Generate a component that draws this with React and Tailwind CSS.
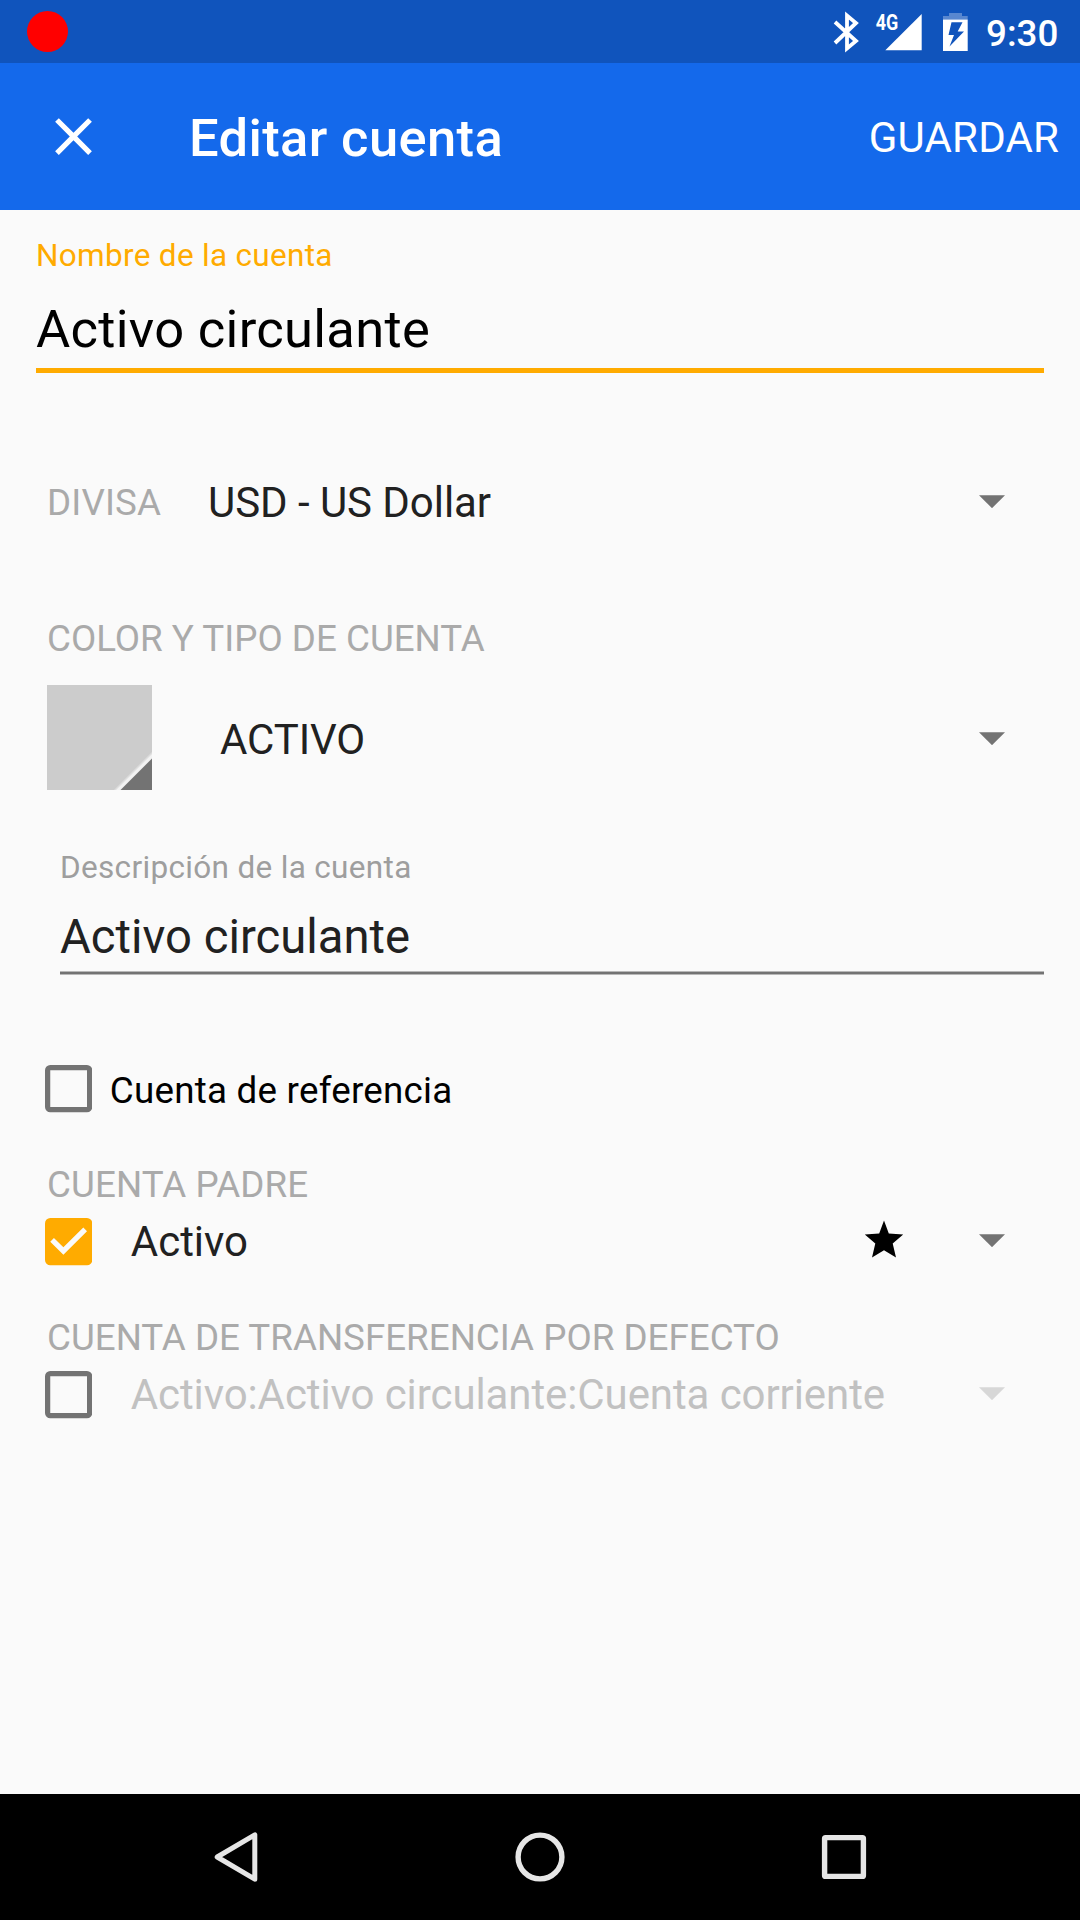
function Arrow({ className = '' }) {
  return (
    <svg viewBox="0 0 26 13" className={`block w-[26px] h-[13px] shrink-0 ${className}`}>
      <path d="M0 0.2H26L13 13.2Z" fill="#737373" />
    </svg>
  )
}

function Checkbox({ checked = false }) {
  return (
    <svg viewBox="0 0 18 18" className="block w-[47.25px] h-[47.25px] shrink-0">
      {checked ? (
        <>
          <rect width="18" height="18" rx="2" fill="#ffab00" />
          <path d="M7 14L2 9l1.41-1.41L7 11.17l7.59-7.59L16 5Z" fill="#fafafa" />
        </>
      ) : (
        <rect x="1" y="1" width="16" height="16" rx="1" fill="none" stroke="#737373" strokeWidth="2" />
      )}
    </svg>
  )
}

function StatusBar() {
  return (
    <div className="h-[63px] bg-[#1054bc] flex items-center pl-[27px] pr-[21px]">
      <div className="size-[41px] rounded-full bg-[#ff0000]" />
      <div className="ml-auto flex items-center">
        <svg viewBox="0 -8 140 56" className="block w-[140px] h-[56px]">
          <path d="M5.5 10.5L26.5 29.5L17.5 37V4L26.5 11.5L5.5 31.5" transform="translate(-0.5 -0.5)" fill="none" stroke="#fff" strokeWidth="3.8" />
          <path d="M91.7 2V38.3H55.3Z" fill="#fff" />
          <text x="45.8" y="17.6" fontSize="22.5" fontWeight="700" textLength="22.5" lengthAdjust="spacingAndGlyphs" fill="#fff">4G</text>
          <path d="M119 1h13v3h5.7v3.5H113V4h6z" fill="#fff" opacity="0.3" />
          <path fillRule="evenodd" d="M113 7.5h24.7V39H113ZM121.5 10.3L118.5 23H124L119.5 34.5L134 19.5H127.7L132.5 10.3Z" fill="#fff" />
        </svg>
        <span className="ml-[16px] mt-[5px] text-[36.75px] leading-[44px] font-medium w-[73px] whitespace-nowrap">9:30</span>
      </div>
    </div>
  )
}

function AppBar() {
  return (
    <header className="h-[147px] bg-[#1469eb] flex items-center pl-[42px] pr-[21px]">
      <svg viewBox="0 0 24 24" className="block size-[63px]">
        <path d="M19 6.41L17.59 5 12 10.59 6.41 5 5 6.41 10.59 12 5 17.59 6.41 19 12 13.41 17.59 19 19 17.59 13.41 12Z" fill="#fff" />
      </svg>
      <h1 className="ml-[84px] mt-[3px] text-[52.5px] leading-[62px] font-medium tracking-[0.37px]">Editar cuenta</h1>
      <button className="ml-auto mt-[2px] text-[42px] leading-[50px] tracking-[0.15px]">GUARDAR</button>
    </header>
  )
}

function NavBar() {
  return (
    <nav className="h-[126px] bg-black flex items-center justify-between pl-[211px] pr-[211px]">
      <svg viewBox="0 0 50 52" className="block w-[50px] h-[52px]">
        <path d="M43.8 3.8V48.2L6.2 26Z" fill="none" stroke="#e6e6e6" strokeWidth="5" strokeLinejoin="round" />
      </svg>
      <svg viewBox="0 0 50 50" className="block size-[50px]">
        <circle cx="25" cy="25" r="21.9" fill="none" stroke="#e6e6e6" strokeWidth="5.4" />
      </svg>
      <svg viewBox="0 0 50 50" className="block size-[50px]">
        <rect x="5.6" y="5.6" width="38.8" height="38.8" rx="1" fill="none" stroke="#e6e6e6" strokeWidth="5.4" />
      </svg>
    </nav>
  )
}

export default function App() {
  return (
    <div className="w-[1080px] h-[1920px] flex flex-col overflow-hidden bg-[#fafafa] font-['Roboto',sans-serif] text-white">
      <StatusBar />
      <AppBar />
      <main className="flex-1 flex flex-col text-[#212121] whitespace-nowrap">
        <section className="mx-[36px] mt-[26px]">
          <div className="text-[31.5px] leading-[40px] tracking-[0.31px] text-[#ffab00]">Nombre de la cuenta</div>
          <div className="mt-[18px] h-[74px] text-[52.5px] leading-[70px] tracking-[0.3px] text-black">Activo circulante</div>
          <div className="h-[5px] bg-[#ffab00]" />
        </section>

        <section className="mt-[98px] ml-[47px] mr-[75.5px] h-[64px] flex items-center">
          <span className="w-[161px] text-[36.75px] leading-[64px] tracking-[0.15px] text-[#aaaaaa]">DIVISA</span>
          <span className="text-[42px] leading-[64px] tracking-[-0.05px]">USD - US Dollar</span>
          <Arrow className="ml-auto mb-[4px]" />
        </section>

        <section className="mt-[82px] ml-[47px] mr-[75.5px]">
          <div className="h-[68px] text-[36.75px] leading-[44px] text-[#aaaaaa]">COLOR Y TIPO DE CUENTA</div>
          <div className="flex items-center h-[105px]">
            <svg viewBox="0 0 105 105" className="block size-[105px]">
              <path d="M0 0H105V105H0Z" fill="#cccccc" />
              <path d="M105 67V105H67Z" fill="#dddddd" />
              <path d="M105 69V105H69Z" fill="#f2f2f2" />
              <path d="M105 73.5V105H73.5Z" fill="#737373" />
            </svg>
            <span className="ml-[68px] mt-[5px] text-[42px] leading-[50px] tracking-[-0.1px]">ACTIVO</span>
            <Arrow className="ml-auto mt-[2px]" />
          </div>
        </section>

        <section className="mt-[58px] ml-[60px] mr-[36px]">
          <div className="text-[31.5px] leading-[40px] tracking-[0.33px] text-[#9e9e9e]">Descripción de la cuenta</div>
          <div className="mt-[19px] h-[64px] text-[47.25px] leading-[60px]">Activo circulante</div>
          <div className="h-[4px] bg-[#737373] border-y border-[#b8b8b8]" />
        </section>

        <section className="mt-[90px] ml-[44.5px] flex items-center h-[48px] text-black">
          <Checkbox />
          <span className="ml-[18px] mt-[3px] text-[36.75px] leading-[44px] tracking-[0.24px]">Cuenta de referencia</span>
        </section>

        <section className="mt-[50px] ml-[44.5px] mr-[75.5px]">
          <div className="ml-[2.5px] text-[36.75px] leading-[44px] tracking-[0.08px] text-[#aaaaaa]">CUENTA PADRE</div>
          <div className="mt-[11px] h-[48px] flex items-center">
            <Checkbox checked />
            <span className="ml-[39px] text-[42px] leading-[50px]">Activo</span>
            <svg viewBox="0 0 40 38" className="block ml-auto mb-[7px] w-[40px] h-[38px]">
              <path d="M20 0.5L24.8 13.4L39.2 14.6L28.7 23.5L32 37.6L20 30.2L8 37.6L11.3 23.5L0.8 14.6L15.2 13.4Z" fill="#000" />
            </svg>
            <Arrow className="ml-[75px] mb-[3px]" />
          </div>
        </section>

        <section className="mt-[50px] ml-[44.5px] mr-[75.5px]">
          <div className="ml-[2.5px] text-[36.75px] leading-[44px] text-[#aaaaaa]">CUENTA DE TRANSFERENCIA POR DEFECTO</div>
          <div className="mt-[11px] h-[48px] flex items-center">
            <Checkbox />
            <span className="ml-[39px] text-[42px] leading-[50px] tracking-[-0.09px] text-[#c1c1c1]">Activo:Activo circulante:Cuenta corriente</span>
            <Arrow className="ml-auto mb-[3px] opacity-25" />
          </div>
        </section>
      </main>
      <NavBar />
    </div>
  )
}
